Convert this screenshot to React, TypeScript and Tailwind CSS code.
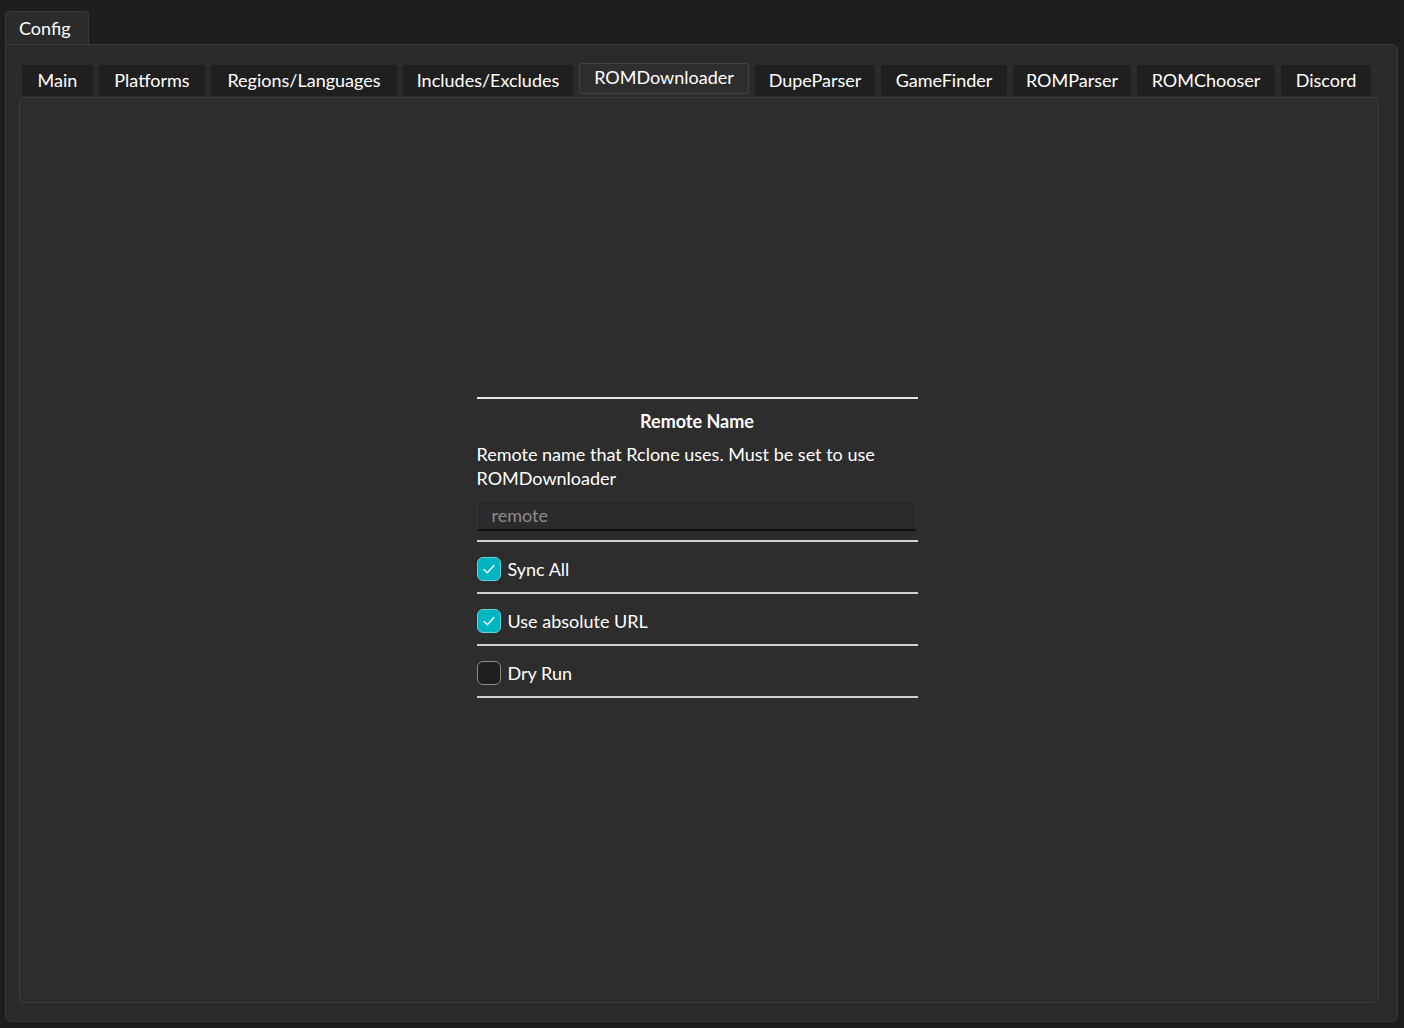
import React, { useState } from 'react';

const tabs: { label: string; width: string }[] = [
  { label: 'Main', width: 'w-[71px]' },
  { label: 'Platforms', width: 'w-[106px]' },
  { label: 'Regions/Languages', width: 'w-[186px]' },
  { label: 'Includes/Excludes', width: 'w-[170px]' },
  { label: 'ROMDownloader', width: 'w-[170px]' },
  { label: 'DupeParser', width: 'w-[120px]' },
  { label: 'GameFinder', width: 'w-[126px]' },
  { label: 'ROMParser', width: 'w-[118px]' },
  { label: 'ROMChooser', width: 'w-[138px]' },
  { label: 'Discord', width: 'w-[90px]' },
];

const CheckRow = ({
  label,
  checked,
  onToggle,
}: {
  label: string;
  checked: boolean;
  onToggle: () => void;
}) => (
  <div className="flex h-[52px] items-center gap-[7px] border-b-2 border-[#cfcfcf] pt-[4px]">
    <button
      onClick={onToggle}
      className={
        checked
          ? 'flex h-[24px] w-[24px] items-center justify-center rounded-[6px] border border-[#5fd3dc] bg-[#00b4c2]'
          : 'flex h-[24px] w-[24px] items-center justify-center rounded-[6px] border border-[#8a8a8a] bg-[#1f1f1f]'
      }
    >
      {checked && (
        <svg width="16" height="16" viewBox="0 0 16 16" fill="none">
          <path d="M3 8.4l3.4 3.3 6.6-7.2" stroke="#ffffff" strokeWidth="1.3" strokeLinecap="round" strokeLinejoin="round" />
        </svg>
      )}
    </button>
    <span className="text-[18px] text-white">{label}</span>
  </div>
);

export default function App() {
  const [active, setActive] = useState('ROMDownloader');
  const [syncAll, setSyncAll] = useState(true);
  const [absUrl, setAbsUrl] = useState(true);
  const [dryRun, setDryRun] = useState(false);

  return (
    <div className="h-[1028px] w-[1404px] overflow-hidden bg-[#1e1e1e] font-['Lato','Noto_Sans',sans-serif] text-white">
      {/* Top tab strip */}
      <div className="flex h-[44px] items-end pl-[5px]">
        <div className="flex h-[33px] w-[84px] items-center rounded-t-[4px] border border-b-0 border-[#3a3a3a] bg-[#2b2b2b] pl-[13px] text-[18px]">
          Config
        </div>
      </div>

      {/* Outer panel */}
      <div className="ml-[5px] flex h-[978px] w-[1393px] flex-col rounded-b-[6px] rounded-tr-[6px] border border-[#3a3a3a] bg-[#2b2b2b] pl-[13px] pr-[18px] pb-[18px] pt-[18px]">
        {/* Inner tabs */}
        <div className="flex h-[34px] items-start gap-[6px] pl-[3px]">
          {tabs.map((t) =>
            t.label === active ? (
              <button
                key={t.label}
                onClick={() => setActive(t.label)}
                className={`${t.width} flex h-[31px] items-center justify-center rounded-[3px] border border-[#444444] bg-[#2e2e2e] pb-[2px] text-[18px] text-white`}
              >
                {t.label}
              </button>
            ) : (
              <button
                key={t.label}
                onClick={() => setActive(t.label)}
                className={`${t.width} mt-[2px] flex h-[31px] items-center justify-center rounded-[3px] bg-[#1f1f1f] text-[18px] text-white`}
              >
                {t.label}
              </button>
            )
          )}
        </div>

        {/* Inner content panel */}
        <div className="flex flex-1 items-center justify-center rounded-[6px] border border-[#3d3d3d] bg-[#2d2d2d]">
          <div className="-mt-[5px] mr-[4px] w-[441px]">
            <div className="border-t-2 border-[#e6e6e6]" />
            <div className="border-b-2 border-[#cfcfcf] pb-[9px]">
              <div className="mt-[9px] text-center text-[18px] font-bold">Remote Name</div>
              <p className="mt-[7px] text-[18px] leading-[24px]">
                Remote name that Rclone uses. Must be set to use ROMDownloader
              </p>
              <input
                placeholder="remote"
                className="mt-[9px] h-[32px] w-[440px] rounded-[3px] border border-[#353535] border-b-2 border-b-[#0f0f0f] bg-[#2b2b2b] px-[14px] text-[18px] text-white outline-none placeholder:text-[#8c8c8c]"
              />
            </div>
            <CheckRow label="Sync All" checked={syncAll} onToggle={() => setSyncAll(!syncAll)} />
            <CheckRow label="Use absolute URL" checked={absUrl} onToggle={() => setAbsUrl(!absUrl)} />
            <CheckRow label="Dry Run" checked={dryRun} onToggle={() => setDryRun(!dryRun)} />
          </div>
        </div>
      </div>
    </div>
  );
}
